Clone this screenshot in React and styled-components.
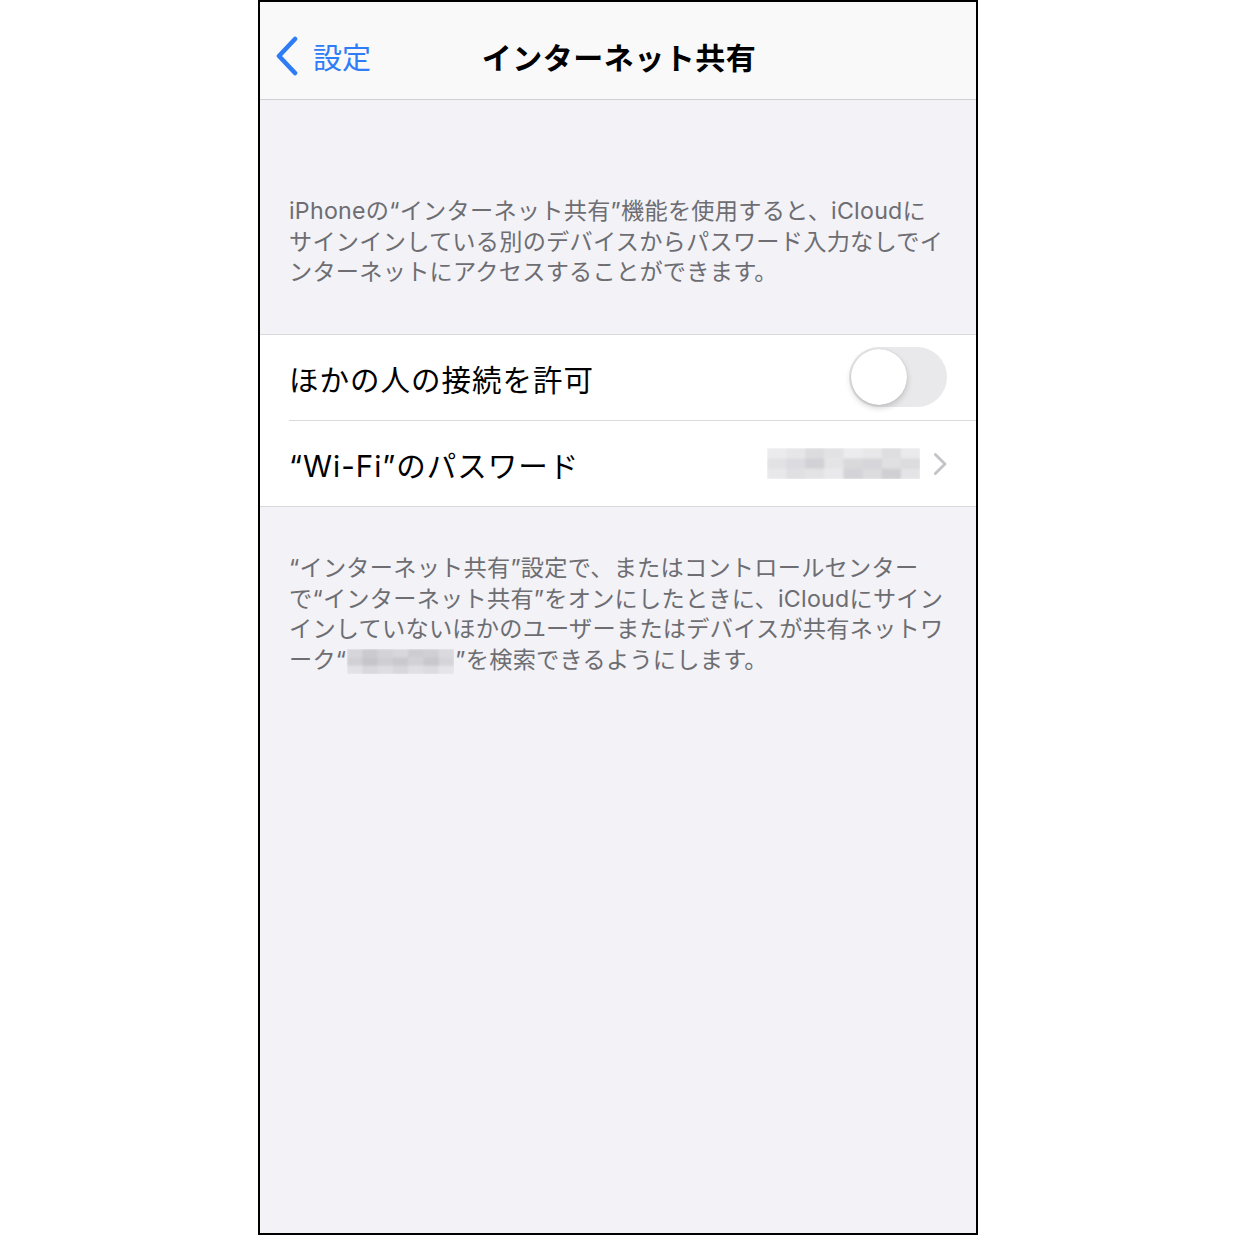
import React from 'react'
import styled, { createGlobalStyle } from 'styled-components'

const GlobalStyle = createGlobalStyle`
  html, body {
    margin: 0;
    padding: 0;
    background: #ffffff;
  }
  body {
    font-family: Inter, "Noto Sans CJK JP", sans-serif;
  }
`

const Page = styled.div`
  display: flex;
  justify-content: center;
`

const Phone = styled.div`
  width: 720px;
  height: 1235px;
  box-sizing: border-box;
  border: 2px solid #000;
  background: #f2f2f7;
  display: flex;
  flex-direction: column;
  overflow: hidden;
`

const NavBar = styled.div`
  height: 98px;
  box-sizing: border-box;
  flex-shrink: 0;
  background: #f9f9fa;
  border-bottom: 1px solid #cfcfd3;
  display: flex;
  align-items: center;
  position: relative;
  padding: 10px 15px 0;
`

const BackButton = styled.div`
  display: flex;
  align-items: center;
  gap: 14px;
  color: #2e7cf6;
  font-size: 29px;
  position: relative;
  z-index: 1;
`

const Title = styled.div`
  position: absolute;
  left: 0;
  right: 0;
  text-align: center;
  font-size: 30px;
  font-weight: 700;
  color: #000;
  letter-spacing: 0.5px;
  padding-left: 2px;
`

const Note = styled.div`
  padding: ${({ $top }) => $top}px 29px ${({ $bottom }) => $bottom}px 29px;
  color: #6d6d72;
  font-size: 23.2px;
  line-height: 30.7px;
  letter-spacing: 0.25px;
`

const Line = styled.div`
  white-space: nowrap;
  display: flex;
  align-items: center;
  height: 30.7px;
`

const Group = styled.div`
  background: #fff;
  border-top: 1px solid #d9d9dd;
  border-bottom: 1px solid #d9d9dd;
`

const Row = styled.div`
  height: 85px;
  margin-left: 29px;
  padding-right: 29px;
  display: flex;
  align-items: center;
  justify-content: space-between;
  border-bottom: ${({ $last }) => ($last ? 'none' : '1px solid #d9d9dd')};
`

const RowLabel = styled.div`
  font-size: 29.5px;
  color: #000;
  letter-spacing: 1px;
`

const Trailing = styled.div`
  display: flex;
  align-items: center;
  gap: 13px;
`

const Switch = styled.div`
  width: 98px;
  height: 60px;
  border-radius: 30px;
  background: #e9e9eb;
  position: relative;
  margin-top: -2px;
`

const Knob = styled.div`
  position: absolute;
  left: 2px;
  top: 2px;
  width: 56px;
  height: 56px;
  border-radius: 50%;
  background: #fff;
  box-shadow: 0 3px 6px rgba(0, 0, 0, 0.18), 0 0 1px rgba(0, 0, 0, 0.2);
`

const Chevron = ({ size = 24, color, width = 2.6, d }) => (
  <svg width={size * 0.6} height={size} viewBox="0 0 12 20" fill="none">
    <path d={d} stroke={color} strokeWidth={width} strokeLinecap="round" strokeLinejoin="round" />
  </svg>
)

// pixelated blur over hidden values
const Mosaic = ({ w, h, cols, rows, shades, bg }) => {
  const cw = w / cols
  const ch = h / rows
  return (
    <svg width={w} height={h} style={{ display: 'block' }}>
      <defs>
        <filter id={`soft-${w}`} x="-5%" y="-5%" width="110%" height="110%">
          <feGaussianBlur stdDeviation="1.2" />
        </filter>
      </defs>
      <rect width={w} height={h} fill={bg} />
      <g filter={`url(#soft-${w})`}>
        {shades.map((s, i) => (
          <rect
            key={i}
            x={(i % cols) * cw}
            y={Math.floor(i / cols) * ch}
            width={cw + 0.5}
            height={ch + 0.5}
            fill={s}
          />
        ))}
      </g>
    </svg>
  )
}

const passwordShades = [
  '#ebebed', '#e6e6e8', '#dcdcdf', '#e2e2e5', '#ececee', '#e8e8ea', '#dedee1', '#eaeaec',
  '#e2e2e5', '#dcdce0', '#d2d2d6', '#e4e4e6', '#d9d9dc', '#d6d6da', '#e0e0e3', '#dcdcdf',
  '#e8e8ea', '#e0e0e3', '#e3e3e5', '#e9e9eb', '#d4d4d8', '#dcdcdf', '#d0d0d4', '#e4e4e6',
]

const networkShades = [
  '#d6d6da', '#cbcbcf', '#d3d3d7', '#d8d8dc', '#cdcdd1', '#d0d0d4', '#dadade',
  '#d1d1d5', '#c6c6ca', '#cfcfd3', '#cacace', '#d2d2d6', '#c8c8cc', '#d5d5d9',
  '#e2e2e6', '#d9d9dd', '#dedee2', '#d8d8dc', '#e0e0e4', '#dcdce0', '#e5e5e9',
]

const InlineMosaic = styled.span`
  display: inline-block;
  margin: 0 1px;
  transform: translateY(1px);
`

export default function App() {
  return (
    <>
      <GlobalStyle />
      <Page>
        <Phone>
          <NavBar>
            <BackButton>
              <svg width="24" height="40" viewBox="0 0 24 40" fill="none">
                <path d="M20 3 L4 20 L20 37" stroke="#2e7cf6" strokeWidth="4.6" strokeLinecap="round" strokeLinejoin="round" />
              </svg>
              <span>設定</span>
            </BackButton>
            <Title>インターネット共有</Title>
          </NavBar>

          <Note $top={96} $bottom={46}>
            <Line>iPhoneの“インターネット共有”機能を使用すると、iCloudに</Line>
            <Line>サインインしている別のデバイスからパスワード入力なしでイ</Line>
            <Line>ンターネットにアクセスすることができます。</Line>
          </Note>

          <Group>
            <Row>
              <RowLabel>ほかの人の接続を許可</RowLabel>
              <Switch>
                <Knob />
              </Switch>
            </Row>
            <Row $last>
              <RowLabel>“Wi-Fi”のパスワード</RowLabel>
              <Trailing>
                <Mosaic w={153} h={31} cols={8} rows={3} shades={passwordShades} bg="#ffffff" />
                <Chevron size={24} color="#c4c4c8" width={2.4} d="M2 2 L10 10 L2 18" />
              </Trailing>
            </Row>
          </Group>

          <Note $top={46} $bottom={0}>
            <Line>“インターネット共有”設定で、またはコントロールセンター</Line>
            <Line>で“インターネット共有”をオンにしたときに、iCloudにサイン</Line>
            <Line>インしていないほかのユーザーまたはデバイスが共有ネットワ</Line>
            <Line>
              ーク“
              <InlineMosaic>
                <Mosaic w={107} h={25} cols={7} rows={3} shades={networkShades} bg="#f2f2f7" />
              </InlineMosaic>
              ”を検索できるようにします。
            </Line>
          </Note>
        </Phone>
      </Page>
    </>
  )
}
